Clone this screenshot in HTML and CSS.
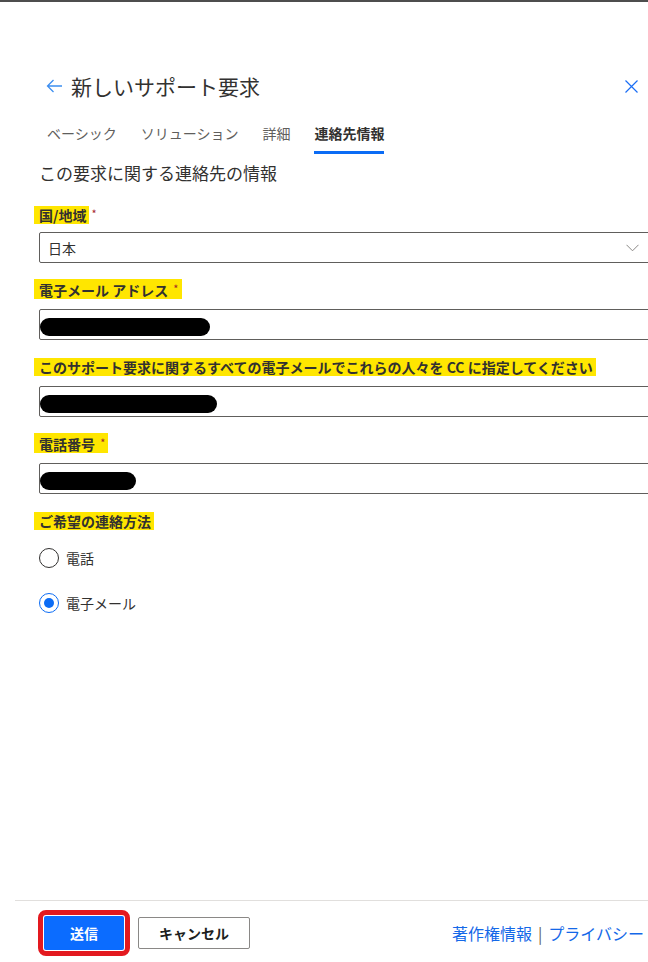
FILE: index.html
```html
<!DOCTYPE html>
<html lang="ja">
<head>
    <meta charset="UTF-8">
    <meta name="viewport" content="width=device-width, initial-scale=1.0">
    <title>新しいサポート要求</title>
    <link rel="stylesheet" href="styles.css">
</head>
<body>
    <div class="panel">
        <!-- Header -->
        <div class="panel-header">
            <button class="back-button" aria-label="戻る">
                <svg width="17" height="16" viewBox="0 0 17 16"><path d="M7.5 2 L1.5 8 L7.5 14 M1.5 8 H16" fill="none" stroke="#3d8ef0" stroke-width="1.3"/></svg>
            </button>
            <h2 class="panel-title">新しいサポート要求</h2>
            <button class="close-button" aria-label="閉じる">
                <svg width="13" height="13" viewBox="0 0 13 13"><path d="M0.5 0.5 L12.5 12.5 M12.5 0.5 L0.5 12.5" fill="none" stroke="#1a6ef5" stroke-width="1.2"/></svg>
            </button>
        </div>

        <!-- Tabs -->
        <div class="tabs">
            <span class="tab">ベーシック</span>
            <span class="tab">ソリューション</span>
            <span class="tab">詳細</span>
            <span class="tab active">連絡先情報</span>
        </div>

        <div class="content">
            <h3 class="section-title">この要求に関する連絡先の情報</h3>

            <div class="field">
                <label class="field-label"><span class="hl">国/地域</span><span class="req">*</span></label>
                <div class="field-box select-box">
                    <span>日本</span>
                    <svg class="chevron" width="13" height="8" viewBox="0 0 13 8"><path d="M0.5 0.8 L6.5 6.8 L12.5 0.8" fill="none" stroke="#8a8886" stroke-width="1"/></svg>
                </div>
            </div>

            <div class="field">
                <label class="field-label"><span class="hl">電子メール アドレス <span class="req">*</span></span></label>
                <div class="field-box"><span class="redact" style="width: 170px;"></span></div>
            </div>

            <div class="field">
                <label class="field-label"><span class="hl">このサポート要求に関するすべての電子メールでこれらの人々を CC に指定してください</span></label>
                <div class="field-box"><span class="redact" style="width: 177px;"></span></div>
            </div>

            <div class="field">
                <label class="field-label"><span class="hl">電話番号 <span class="req">*</span></span></label>
                <div class="field-box"><span class="redact" style="width: 96px;"></span></div>
            </div>

            <div class="field-label"><span class="hl">ご希望の連絡方法</span></div>

            <div class="radio-group">
                <label class="radio-row"><span class="radio"></span>電話</label>
                <label class="radio-row"><span class="radio checked"></span>電子メール</label>
            </div>
        </div>

        <!-- Footer -->
        <div class="panel-footer">
            <button class="submit-button">送信</button>
            <button class="cancel-button">キャンセル</button>
            <div class="footer-links">
                <a href="#">著作権情報</a>
                <span class="sep">|</span>
                <a href="#">プライバシー</a>
            </div>
        </div>
    </div>
</body>
</html>
```

FILE: styles.css
```css
/* Global Styles */
* {
    box-sizing: border-box;
    font-family: "Noto Sans CJK JP", "Noto Sans", sans-serif;
}

html, body {
    margin: 0;
    padding: 0;
    height: 100%;
    overflow: hidden;
    background-color: #ffffff;
    color: #323130;
}

body {
    border-top: 2px solid #4d4d4d;
}

.panel {
    height: 100%;
    display: flex;
    flex-direction: column;
    padding-left: 15px;
}

/* Header */
.panel-header {
    display: flex;
    align-items: center;
    height: 32px;
    margin-top: 68px;
    padding-left: 31px;
}

.back-button,
.close-button {
    background: none;
    border: none;
    padding: 0;
    cursor: pointer;
    display: flex;
}

.panel-title {
    margin: 0 0 0 8px;
    font-size: 21px;
    font-weight: 400;
    line-height: 32px;
    flex-grow: 1;
}

.close-button {
    margin-right: 10px;
}

/* Tabs */
.tabs {
    display: flex;
    gap: 24px;
    padding-left: 32px;
    margin-top: 17px;
}

.tab {
    font-size: 14px;
    line-height: 20px;
    padding: 4px 0 8px;
    color: #605e5c;
    border-bottom: 3px solid transparent;
}

.tab.active {
    color: #323130;
    font-weight: 700;
    border-bottom-color: #0b6cf5;
}

/* Content */
.content {
    padding-left: 24px;
}

.section-title {
    margin: 7px 0 17px;
    font-size: 17px;
    font-weight: 400;
    line-height: 24px;
}

.field {
    margin-bottom: 16px;
}

.field-label {
    display: block;
    height: 22px;
    line-height: 22px;
    margin-bottom: 8px;
    font-size: 14px;
    font-weight: 700;
}

.hl {
    display: inline-block;
    line-height: 18px;
    background-color: #ffe600;
    padding: 0 3px 0 5px;
    margin-left: -5px;
}

.req {
    color: #a4262c;
    font-size: 11px;
    font-weight: 400;
    vertical-align: 3px;
    margin-left: 2px;
}

.field-box {
    height: 31px;
    width: calc(100% + 10px);
    border: 1px solid #605e5c;
    border-radius: 2px;
    display: flex;
    align-items: center;
    padding-top: 5px;
}

.select-box {
    padding: 0 18px 0 8px;
    font-size: 14px;
    justify-content: space-between;
}

.chevron {
    margin-top: 1px;
}

.redact {
    display: block;
    height: 18px;
    border-radius: 9px;
    background-color: #000000;
}

/* Radios */
.radio-group {
    display: flex;
    flex-direction: column;
    gap: 25px;
    margin-top: 16px;
}

.radio-row {
    display: flex;
    align-items: center;
    gap: 7px;
    height: 20px;
    font-size: 14px;
}

.radio {
    width: 20px;
    height: 20px;
    border-radius: 50%;
    border: 1px solid #323130;
    display: flex;
    align-items: center;
    justify-content: center;
}

.radio.checked {
    border-color: #0b6cf5;
}

.radio.checked::after {
    content: "";
    width: 10px;
    height: 10px;
    border-radius: 50%;
    background-color: #0b6cf5;
}

/* Footer */
.panel-footer {
    margin-top: auto;
    border-top: 1px solid #e1dfdd;
    display: flex;
    align-items: center;
    padding: 15px 4px 12px 29px;
}

.submit-button {
    width: 80px;
    height: 34px;
    border: none;
    border-radius: 2px;
    background-color: #0b6cff;
    color: #ffffff;
    font-size: 14px;
    font-weight: 700;
    outline: 5px solid #e3191f;
    outline-offset: 1px;
    cursor: pointer;
}

.cancel-button {
    margin-left: 14px;
    width: 112px;
    height: 32px;
    border: 1px solid #8a8886;
    border-radius: 2px;
    background-color: #ffffff;
    color: #201f1e;
    font-size: 14px;
    font-weight: 700;
    cursor: pointer;
}

.footer-links {
    margin-left: auto;
    display: flex;
    align-items: center;
    gap: 6px;
    font-size: 16px;
}

.footer-links a {
    color: #1468e8;
    text-decoration: none;
}

.sep {
    color: #605e5c;
}
```
